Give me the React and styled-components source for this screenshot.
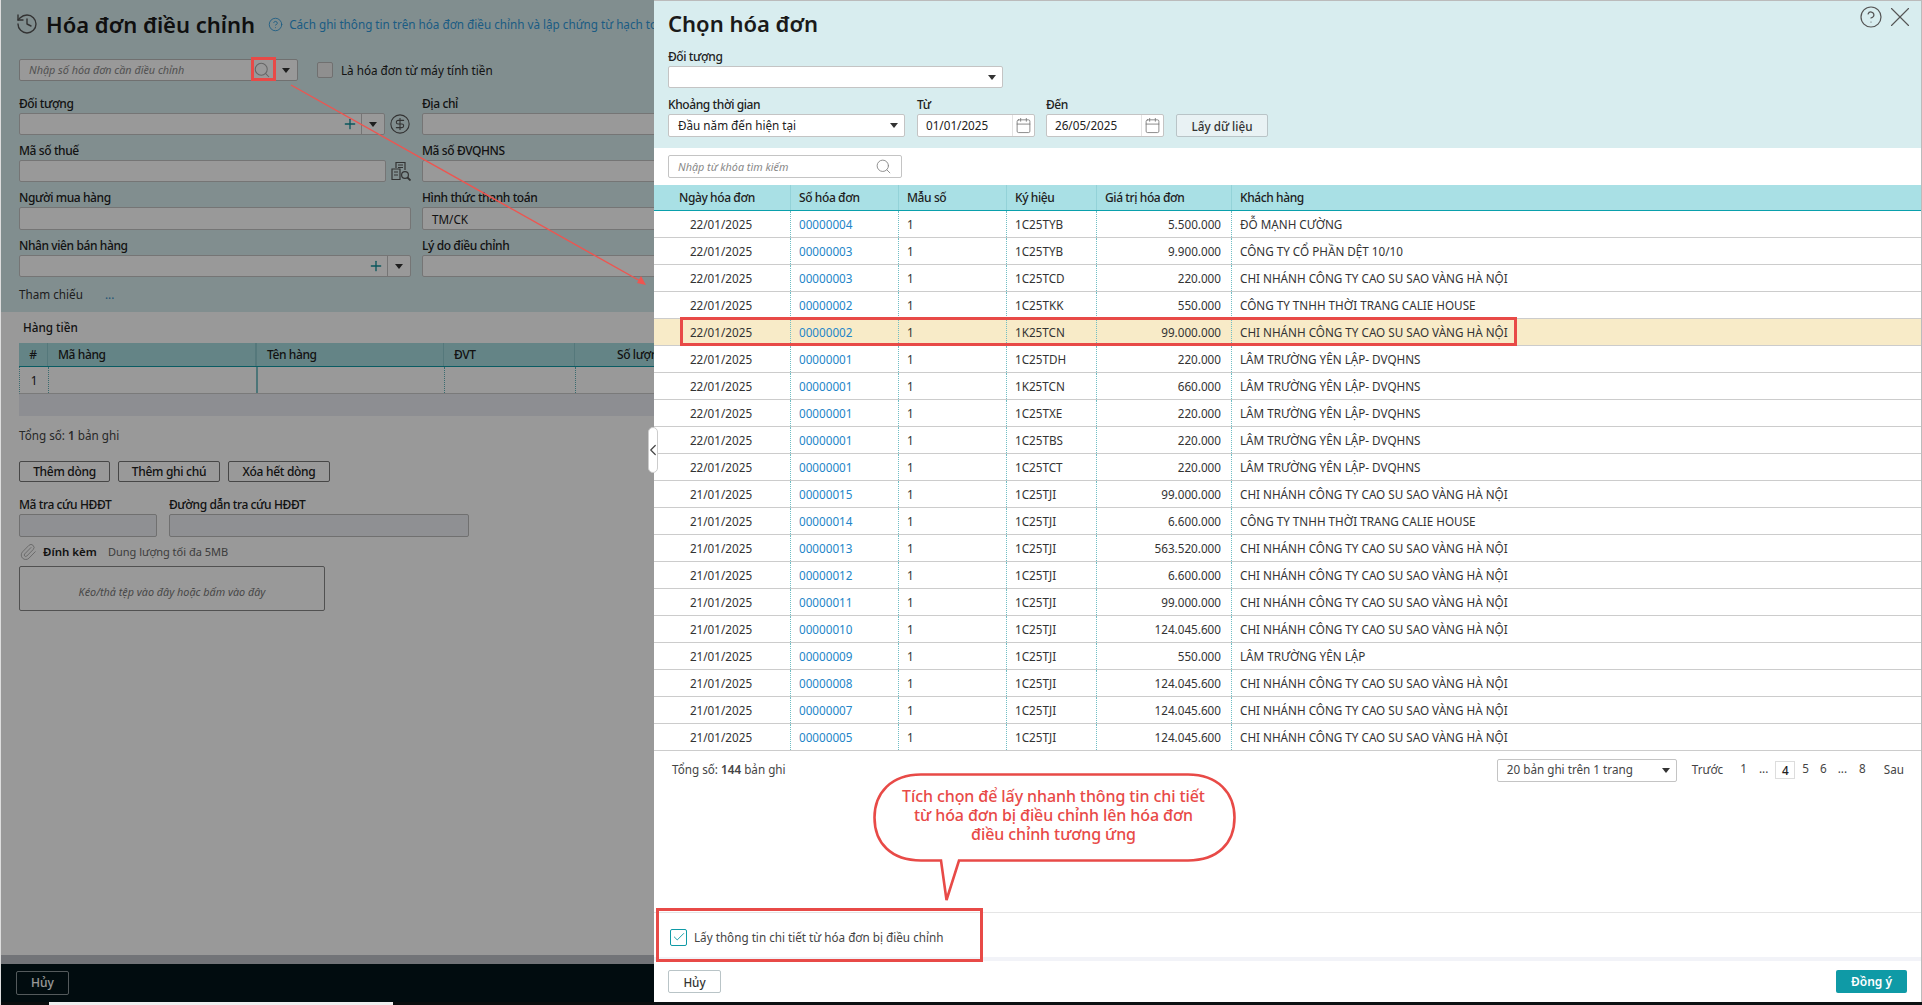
import styled, { createGlobalStyle } from "styled-components";
import {
  Calendar,
  Check,
  ChevronLeft,
  CircleDollarSign,
  CircleHelp,
  History,
  Paperclip,
  Plus,
  Search,
  X,
} from "lucide-react";

const CHI_NHANH = "CHI NHÁNH CÔNG TY CAO SU SAO VÀNG HÀ NỘI";
const LAM_TRUONG = "LÂM TRƯỜNG YÊN LẬP- DVQHNS";
const CALIE = "CÔNG TY TNHH THỜI TRANG CALIE HOUSE";

const invoices = [
  ["22/01/2025", "00000004", "1C25TYB", "5.500.000", "ĐỖ MẠNH CƯỜNG"],
  ["22/01/2025", "00000003", "1C25TYB", "9.900.000", "CÔNG TY CỔ PHẦN DỆT 10/10"],
  ["22/01/2025", "00000003", "1C25TCD", "220.000", CHI_NHANH],
  ["22/01/2025", "00000002", "1C25TKK", "550.000", CALIE],
  ["22/01/2025", "00000002", "1K25TCN", "99.000.000", CHI_NHANH],
  ["22/01/2025", "00000001", "1C25TDH", "220.000", LAM_TRUONG],
  ["22/01/2025", "00000001", "1K25TCN", "660.000", LAM_TRUONG],
  ["22/01/2025", "00000001", "1C25TXE", "220.000", LAM_TRUONG],
  ["22/01/2025", "00000001", "1C25TBS", "220.000", LAM_TRUONG],
  ["22/01/2025", "00000001", "1C25TCT", "220.000", LAM_TRUONG],
  ["21/01/2025", "00000015", "1C25TJI", "99.000.000", CHI_NHANH],
  ["21/01/2025", "00000014", "1C25TJI", "6.600.000", CALIE],
  ["21/01/2025", "00000013", "1C25TJI", "563.520.000", CHI_NHANH],
  ["21/01/2025", "00000012", "1C25TJI", "6.600.000", CHI_NHANH],
  ["21/01/2025", "00000011", "1C25TJI", "99.000.000", CHI_NHANH],
  ["21/01/2025", "00000010", "1C25TJI", "124.045.600", CHI_NHANH],
  ["21/01/2025", "00000009", "1C25TJI", "550.000", "LÂM TRƯỜNG YÊN LẬP"],
  ["21/01/2025", "00000008", "1C25TJI", "124.045.600", CHI_NHANH],
  ["21/01/2025", "00000007", "1C25TJI", "124.045.600", CHI_NHANH],
  ["21/01/2025", "00000005", "1C25TJI", "124.045.600", CHI_NHANH],
];

const App = () => {
  return (
    <Screen>
      <GlobalStyle />
      <InvoicePage>
        <TopSection>
          <PageTitleRow>
            <History size={24} strokeWidth={1.4} color="#555" />
            <PageTitle>Hóa đơn điều chỉnh</PageTitle>
            <CircleHelp size={15} strokeWidth={1.4} color="#2f9adb" />
            <HelpLink>Cách ghi thông tin trên hóa đơn điều chỉnh và lập chứng từ hạch toán</HelpLink>
          </PageTitleRow>

          <SearchRow>
            <InvoiceSearch>
              <Hint>Nhập số hóa đơn cần điều chỉnh</Hint>
              <Search size={18} strokeWidth={1.4} color="#aaa" />
              <ArrowBox $width={22} $plain>
                <Caret />
              </ArrowBox>
            </InvoiceSearch>
            <EmptyCheck />
            <CheckLabel>Là hóa đơn từ máy tính tiền</CheckLabel>
          </SearchRow>

          <FormGrid>
            <Field>
              <Label>Đối tượng</Label>
              <FieldWithIcon>
                <Input $width={366}>
                  <Plus size={16} strokeWidth={2} color="#11909a" />
                  <ArrowBox $width={23}>
                    <Caret />
                  </ArrowBox>
                </Input>
                <CircleDollarSign size={22} strokeWidth={1.2} color="#555" />
              </FieldWithIcon>
            </Field>
            <Field>
              <Label>Địa chỉ</Label>
              <Input />
            </Field>
            <Field>
              <Label>Mã số thuế</Label>
              <FieldWithIcon>
                <Input $width={367} />
                <BuildingSearchIcon />
              </FieldWithIcon>
            </Field>
            <Field>
              <Label>Mã số ĐVQHNS</Label>
              <Input />
            </Field>
            <Field>
              <Label>Người mua hàng</Label>
              <Input $height={23} />
            </Field>
            <Field>
              <Label>Hình thức thanh toán</Label>
              <Input $height={23}>
                <InputValue>TM/CK</InputValue>
                <TrailingCaret>
                  <Caret />
                </TrailingCaret>
              </Input>
            </Field>
            <Field>
              <Label>Nhân viên bán hàng</Label>
              <Input>
                <Plus size={16} strokeWidth={2} color="#11909a" />
                <ArrowBox $width={23}>
                  <Caret />
                </ArrowBox>
              </Input>
            </Field>
            <Field>
              <Label>Lý do điều chỉnh</Label>
              <Input />
            </Field>
          </FormGrid>

          <ReferenceRow>
            <span>Tham chiếu</span>
            <RefDots>...</RefDots>
          </ReferenceRow>
        </TopSection>

        <LinesSection>
          <LinesTitle>Hàng tiền</LinesTitle>
          <LinesHead>
            <LinesHeadCell $center>#</LinesHeadCell>
            <LinesHeadCell $strong>Mã hàng</LinesHeadCell>
            <LinesHeadCell>Tên hàng</LinesHeadCell>
            <LinesHeadCell>ĐVT</LinesHeadCell>
            <LinesHeadCell $right>Số lượng</LinesHeadCell>
          </LinesHead>
          <LinesRow>
            <LinesCell $center>1</LinesCell>
            <LinesCell $strong />
            <LinesCell />
            <LinesCell />
            <LinesCell />
          </LinesRow>
          <LinesSummary />
          <TotalLine>
            Tổng số: <b>1</b> bản ghi
          </TotalLine>
          <ActionRow>
            <OutlineButton $width={91}>Thêm dòng</OutlineButton>
            <OutlineButton $width={102}>Thêm ghi chú</OutlineButton>
            <OutlineButton $width={102}>Xóa hết dòng</OutlineButton>
          </ActionRow>
          <LookupRow>
            <Field>
              <Label>Mã tra cứu HĐĐT</Label>
              <LookupInput $width={138} />
            </Field>
            <Field>
              <Label>Đường dẫn tra cứu HĐĐT</Label>
              <LookupInput $width={300} />
            </Field>
          </LookupRow>
          <AttachRow>
            <Paperclip size={18} strokeWidth={1.2} color="#aaa" />
            <AttachTitle>Đính kèm</AttachTitle>
            <AttachHint>Dung lượng tối đa 5MB</AttachHint>
          </AttachRow>
          <DropZone>Kéo/thả tệp vào đây hoặc bấm vào đây</DropZone>
        </LinesSection>

        <PageStrip />
        <PageBar>
          <DarkButton>Hủy</DarkButton>
        </PageBar>
        <ScrollTrack>
          <ScrollThumb />
        </ScrollTrack>
        <Dim />
      </InvoicePage>

      <PickerPanel>
        <PickerHeader>
          <PickerTitleRow>
            <PickerTitle>Chọn hóa đơn</PickerTitle>
            <PickerTools>
              <CircleHelp size={24} strokeWidth={1.2} color="#555" />
              <X size={34} strokeWidth={0.8} color="#555" />
            </PickerTools>
          </PickerTitleRow>
          <Field>
            <Label>Đối tượng</Label>
            <Input $width={335}>
              <TrailingCaret>
                <Caret />
              </TrailingCaret>
            </Input>
          </Field>
          <FilterRow>
            <Field>
              <Label>Khoảng thời gian</Label>
              <Input $width={237} $height={23}>
                <InputValue $raised>Đầu năm đến hiện tại</InputValue>
                <TrailingCaret>
                  <Caret />
                </TrailingCaret>
              </Input>
            </Field>
            <Field>
              <Label>Từ</Label>
              <DateInput value="01/01/2025" />
            </Field>
            <Field>
              <Label>Đến</Label>
              <DateInput value="26/05/2025" />
            </Field>
            <FetchButton>Lấy dữ liệu</FetchButton>
          </FilterRow>
        </PickerHeader>

        <KeywordRow>
          <KeywordBox>
            <Hint>Nhập từ khóa tìm kiếm</Hint>
            <Search size={17} strokeWidth={1.3} color="#888" />
          </KeywordBox>
        </KeywordRow>

        <GridHead>
          <GridHeadCell $first>Ngày hóa đơn</GridHeadCell>
          <GridHeadCell>Số hóa đơn</GridHeadCell>
          <GridHeadCell>Mẫu số</GridHeadCell>
          <GridHeadCell>Ký hiệu</GridHeadCell>
          <GridHeadCell>Giá trị hóa đơn</GridHeadCell>
          <GridHeadCell>Khách hàng</GridHeadCell>
        </GridHead>
        {invoices.map((row, i) => (
          <GridRow key={i} $active={i === 4}>
            <GridCell $center>{row[0]}</GridCell>
            <GridCell $link>{row[1]}</GridCell>
            <GridCell>1</GridCell>
            <GridCell>{row[2]}</GridCell>
            <GridCell $right>{row[3]}</GridCell>
            <GridCell>{row[4]}</GridCell>
          </GridRow>
        ))}

        <PagerRow>
          <PagerText>
            Tổng số: <b>144</b> bản ghi
          </PagerText>
          <Pager>
            <PageSize>
              <InputValue $raised>20 bản ghi trên 1 trang</InputValue>
              <TrailingCaret>
                <Caret />
              </TrailingCaret>
            </PageSize>
            <PageWord $left={15}>Trước</PageWord>
            <PageNum $left={17}>1</PageNum>
            <PageNum $left={12}>...</PageNum>
            <CurrentPage>4</CurrentPage>
            <PageNum $left={7}>5</PageNum>
            <PageNum $left={11}>6</PageNum>
            <PageNum $left={11}>...</PageNum>
            <PageNum $left={12}>8</PageNum>
            <PageWord $left={18}>Sau</PageWord>
          </Pager>
        </PagerRow>

        <PanelSpacer />

        <DetailRow>
          <TickBox>
            <Check size={14} strokeWidth={1.6} color="#0f9aa6" />
          </TickBox>
          <span>Lấy thông tin chi tiết từ hóa đơn bị điều chỉnh</span>
        </DetailRow>
        <FooterStrip />
        <PanelFooter>
          <FetchButton $small>Hủy</FetchButton>
          <PrimaryButton>Đồng ý</PrimaryButton>
        </PanelFooter>
      </PickerPanel>

      <CollapseHandle>
        <ChevronLeft size={18} strokeWidth={1.6} color="#444" />
      </CollapseHandle>

      <ArrowLine viewBox="0 0 360 204" width="360" height="204">
        <line x1="1" y1="1" x2="352" y2="198" stroke="#ee5550" strokeWidth="1.4" />
        <path d="M356 201 L347 199 L351 192 Z" fill="#ee5550" />
      </ArrowLine>
      <RedFrame $x={251} $y={57} $w={25} $h={24} />
      <RedFrame $x={680} $y={317} $w={837} $h={29} />
      <RedFrame $x={656} $y={908} $w={327} $h={54} />

      <Callout>
        <CalloutShape viewBox="0 0 363 130" width="363" height="130">
          <path
            d="M48 1.5 H315 C345 1.5 361.5 20 361.5 44.5 C361.5 70 345 87.5 315 87.5 H86 L73.5 127 L68 87.5 H48 C18 87.5 1.5 70 1.5 44.5 C1.5 20 18 1.5 48 1.5 Z"
            fill="#fff"
            stroke="#e84a47"
            strokeWidth="2.6"
          />
        </CalloutShape>
        <CalloutText>
          Tích chọn để lấy nhanh thông tin chi tiết
          <br />
          từ hóa đơn bị điều chỉnh lên hóa đơn
          <br />
          điều chỉnh tương ứng
        </CalloutText>
      </Callout>
    </Screen>
  );
};

const DateInput = ({ value }) => (
  <DateBox>
    <DateValue>{value}</DateValue>
    <DateIcon>
      <Calendar size={17} strokeWidth={1.2} color="#777" />
    </DateIcon>
  </DateBox>
);

const BuildingSearchIcon = () => (
  <svg width="20" height="20" viewBox="0 0 20 20" fill="none" stroke="#555" strokeWidth="1.2">
    <path d="M5 7V1.5h9V9" />
    <path d="M7 4h5M7 6.5h5" />
    <path d="M1 18.5V8h8v10.5z" />
    <path d="M3 11h4M3 14h4" />
    <circle cx="14" cy="14" r="3.4" />
    <path d="M16.5 16.5L19.5 19.5" strokeWidth="1.8" />
  </svg>
);

export default App;

const GlobalStyle = createGlobalStyle`
  html, body {
    margin: 0;
    padding: 0;
    background: #111;
    overflow: hidden;
  }
  * {
    box-sizing: border-box;
  }
  svg {
    flex-shrink: 0;
  }
  b {
    font-weight: 600;
  }
`;

const Screen = styled.div`
  position: relative;
  display: flex;
  width: 1922px;
  height: 1005px;
  overflow: hidden;
  background: #0d1113;
  font-family: "Noto Sans", "Open Sans", sans-serif;
  font-size: 11.7px;
  line-height: 18px;
  color: #212121;
`;

const InvoicePage = styled.div`
  position: relative;
  display: flex;
  flex-direction: column;
  width: 654px;
  height: 1005px;
  flex-shrink: 0;
  overflow: hidden;
  background: #fff;
  border-left: 1px solid #ddd;
`;

const Dim = styled.div`
  position: absolute;
  inset: 0 0 3px 0;
  background: rgba(0, 0, 0, 0.4);
`;

const TopSection = styled.div`
  height: 312px;
  flex-shrink: 0;
  padding-left: 18px;
  background: #d8edef;
`;

const PageTitleRow = styled.div`
  display: flex;
  align-items: center;
  height: 48px;
  white-space: nowrap;
  svg:first-child {
    margin-left: -4px;
  }
`;

const PageTitle = styled.h1`
  margin: 0 13px 0 7px;
  font-size: 22px;
  font-weight: 600;
  line-height: 28px;
  color: #1a1a1a;
`;

const HelpLink = styled.span`
  margin-left: 6px;
  font-size: 11.7px;
  color: #2f9adb;
`;

const SearchRow = styled.div`
  display: flex;
  align-items: center;
  height: 22px;
  margin-top: 11px;
`;

const InvoiceSearch = styled.div`
  display: flex;
  align-items: center;
  width: 279px;
  height: 22px;
  padding-left: 9px;
  background: #fff;
  border: 1px solid #bbb;
  border-radius: 2px;
  svg {
    margin: 0 1px 0 auto;
  }
`;

const Hint = styled.span`
  font-size: 10.8px;
  font-style: italic;
  color: #888;
`;

const EmptyCheck = styled.span`
  width: 16px;
  height: 16px;
  margin-left: 19px;
  background: #eee;
  border: 1px solid #bbb;
  border-radius: 2px;
`;

const CheckLabel = styled.span`
  margin-left: 8px;
`;

const FormGrid = styled.div`
  display: grid;
  grid-template-columns: 392px 300px;
  column-gap: 11px;
  row-gap: 7px;
  margin-top: 14px;
`;

const Field = styled.div`
  display: flex;
  flex-direction: column;
  min-width: 0;
`;

const Label = styled.label`
  height: 18px;
  font-size: 12px;
  font-weight: 500;
  line-height: 18px;
  letter-spacing: -0.4px;
  color: #212121;
  white-space: nowrap;
`;

const FieldWithIcon = styled.div`
  display: flex;
  align-items: center;
  justify-content: space-between;
`;

const Input = styled.div`
  display: flex;
  align-items: center;
  justify-content: flex-end;
  width: ${(p) => (p.$width ? `${p.$width}px` : "100%")};
  height: ${(p) => p.$height || 22}px;
  background: #fff;
  border: 1px solid #c4c4c4;
  border-radius: 2px;
`;

const InputValue = styled.span`
  margin: 0 auto ${(p) => (p.$raised ? 2 : 0)}px 0;
  padding-left: 9px;
  white-space: nowrap;
`;

const ArrowBox = styled.span`
  display: flex;
  align-items: center;
  justify-content: center;
  width: ${(p) => p.$width}px;
  height: 100%;
  margin-left: 3px;
  border-left: ${(p) => (p.$plain ? "none" : "1px solid #c4c4c4")};
`;

const TrailingCaret = styled.span`
  display: flex;
  align-items: center;
  padding-right: 6px;
`;

const Caret = styled.span`
  width: 0;
  height: 0;
  border-left: 4px solid transparent;
  border-right: 4px solid transparent;
  border-top: 5px solid #333;
`;

const ReferenceRow = styled.div`
  display: flex;
  gap: 22px;
  margin-top: 8px;
  color: #333;
`;

const RefDots = styled.span`
  color: #3a8fc4;
`;

const LinesSection = styled.div`
  display: flex;
  flex-direction: column;
  padding-left: 18px;
`;

const LinesTitle = styled.div`
  margin: 6px 0 7px 4px;
  font-weight: 500;
`;

const linesColumns = "29px 209px 187px 131px 100px";

const LinesHead = styled.div`
  display: grid;
  grid-template-columns: ${linesColumns};
  height: 24px;
  background: #a7dcdf;
  border-bottom: 1px solid #0f9aa6;
`;

const LinesHeadCell = styled.div`
  padding: 0 9px 0 ${(p) => (p.$center ? 9 : 10)}px;
  font-size: 12px;
  font-weight: 500;
  line-height: 23px;
  letter-spacing: -0.4px;
  text-align: ${(p) => (p.$center ? "center" : p.$right ? "right" : "left")};
  border-right: ${(p) => (p.$strong ? "2px" : "1px")} solid #8ec9cd;
  white-space: nowrap;
`;

const LinesRow = styled.div`
  display: grid;
  grid-template-columns: ${linesColumns};
  height: 27px;
  border-bottom: 1px solid #ccc;
  border-left: 1px dotted #5fb3ba;
`;

const LinesCell = styled.div`
  line-height: 26px;
  text-align: ${(p) => (p.$center ? "center" : "left")};
  border-right: ${(p) => (p.$strong ? "2px solid #7fc3c8" : "1px dotted #5fb3ba")};
`;

const LinesSummary = styled.div`
  height: 22px;
  background: #ebedf3;
`;

const TotalLine = styled.div`
  margin-top: 10px;
  color: #444;
`;

const ActionRow = styled.div`
  display: flex;
  gap: 8px;
  margin-top: 17px;
`;

const OutlineButton = styled.button`
  width: ${(p) => p.$width}px;
  height: 21px;
  padding: 0;
  font: 500 12px/19px "Noto Sans", sans-serif;
  letter-spacing: -0.3px;
  color: #212121;
  background: #fff;
  border: 1px solid #777;
  border-radius: 2px;
`;

const LookupRow = styled.div`
  display: flex;
  gap: 12px;
  margin-top: 14px;
`;

const LookupInput = styled.div`
  width: ${(p) => p.$width}px;
  height: 23px;
  background: #eff0f6;
  border: 1px solid #bbb;
  border-radius: 2px;
`;

const AttachRow = styled.div`
  display: flex;
  align-items: center;
  height: 16px;
  margin-top: 7px;
`;

const AttachTitle = styled.span`
  margin-left: 6px;
  font-size: 11.5px;
  font-weight: 600;
`;

const AttachHint = styled.span`
  margin-left: 11px;
  font-size: 11px;
  color: #666;
`;

const DropZone = styled.div`
  display: flex;
  align-items: center;
  justify-content: center;
  width: 306px;
  height: 45px;
  margin-top: 6px;
  padding-top: 7px;
  font-size: 10.8px;
  font-style: italic;
  color: #777;
  border: 1px solid #888;
  border-radius: 2px;
`;

const PageStrip = styled.div`
  height: 9px;
  margin-top: auto;
  flex-shrink: 0;
  background: #bfc1c8;
`;

const PageBar = styled.div`
  display: flex;
  align-items: flex-start;
  height: 38px;
  flex-shrink: 0;
  padding: 7px 0 0 15px;
  background: #021519;
`;

const DarkButton = styled.button`
  width: 53px;
  height: 24px;
  padding: 0;
  font: 500 12px/20px "Noto Sans", sans-serif;
  color: #fff;
  background: transparent;
  border: 1px solid #8c979a;
  border-radius: 2px;
`;

const ScrollTrack = styled.div`
  height: 3px;
  flex-shrink: 0;
  padding-left: 48px;
  background: #0a0d0e;
`;

const ScrollThumb = styled.div`
  width: 344px;
  height: 3px;
  background: #eee;
`;

const PickerPanel = styled.div`
  display: flex;
  flex-direction: column;
  width: 1268px;
  height: 1002px;
  background: #fff;
  border-top: 1px solid #bbb;
  border-right: 1px solid #bbb;
`;

const PickerHeader = styled.div`
  height: 147px;
  flex-shrink: 0;
  padding-left: 14px;
  background: #d8edef;
`;

const PickerTitleRow = styled.div`
  display: flex;
  justify-content: space-between;
  height: 47px;
`;

const PickerTitle = styled.h2`
  margin: 8px 0 0;
  font-size: 22px;
  font-weight: 600;
  line-height: 28px;
  color: #1a1a1a;
`;

const PickerTools = styled.div`
  display: flex;
  align-items: center;
  height: 32px;
  padding-right: 4px;
`;

const FilterRow = styled.div`
  display: flex;
  align-items: flex-end;
  margin-top: 8px;
  & > :nth-child(2) {
    margin-left: 12px;
  }
  & > :nth-child(3) {
    margin-left: 11px;
  }
  & > :nth-child(4) {
    margin-left: 12px;
  }
`;

const DateBox = styled.div`
  display: flex;
  align-items: center;
  width: 118px;
  height: 23px;
  background: #fff;
  border: 1px solid #c4c4c4;
  border-radius: 2px;
`;

const DateValue = styled.span`
  flex: 1;
  padding-left: 8px;
  margin-bottom: 2px;
`;

const DateIcon = styled.span`
  display: flex;
  align-items: center;
  justify-content: center;
  width: 22px;
  height: 100%;
  border-left: 1px solid #e3e3e3;
`;

const FetchButton = styled.button`
  width: ${(p) => (p.$small ? 53 : 92)}px;
  height: 23px;
  padding: 0;
  font: 500 11.7px/20px "Noto Sans", sans-serif;
  color: #333;
  background: ${(p) => (p.$small ? "#fff" : "#e9f2f4")};
  border: 1px solid #b9c4c7;
  border-radius: 2px;
`;

const KeywordRow = styled.div`
  height: 37px;
  flex-shrink: 0;
  padding: 7px 0 0 14px;
`;

const KeywordBox = styled.div`
  display: flex;
  align-items: center;
  justify-content: space-between;
  width: 234px;
  height: 23px;
  padding: 0 9px;
  border: 1px solid #c4c4c4;
  border-radius: 2px;
`;

const gridColumns = "136px 108px 108px 90px 135px 1fr";

const GridHead = styled.div`
  display: grid;
  grid-template-columns: ${gridColumns};
  height: 26px;
  flex-shrink: 0;
  background: #a9e0e5;
  border-bottom: 1px solid #0aa0ac;
`;

const GridHeadCell = styled.div`
  padding-left: ${(p) => (p.$first ? 25 : 8)}px;
  font-size: 12px;
  font-weight: 500;
  line-height: 25px;
  letter-spacing: -0.4px;
  border-left: ${(p) => (p.$first ? "none" : "1px solid #93d2d8")};
`;

const GridRow = styled.div`
  display: grid;
  grid-template-columns: ${gridColumns};
  height: 27px;
  flex-shrink: 0;
  background: ${(p) => (p.$active ? "#f8ebc8" : "#fff")};
  border-bottom: 1px solid #ccc;
`;

const GridCell = styled.div`
  padding: 0 10px 0 8px;
  line-height: 26px;
  white-space: nowrap;
  color: ${(p) => (p.$link ? "#2285c8" : "#333")};
  text-align: ${(p) => (p.$center ? "center" : p.$right ? "right" : "left")};
  &:not(:first-child) {
    border-left: 1px dotted #6fbdc4;
  }
`;

const PagerRow = styled.div`
  display: flex;
  align-items: center;
  justify-content: space-between;
  height: 24px;
  flex-shrink: 0;
  margin-top: 7px;
  padding: 0 17px 0 18px;
  color: #444;
`;

const PagerText = styled.span`
  margin-bottom: 2px;
`;

const Pager = styled.div`
  display: flex;
  align-items: center;
`;

const PageSize = styled.div`
  display: flex;
  align-items: center;
  width: 180px;
  height: 23px;
  background: #fff;
  border: 1px solid #c4c4c4;
  border-radius: 2px;
`;

const PageWord = styled.span`
  margin: 0 0 2px ${(p) => p.$left}px;
`;

const PageNum = styled.span`
  margin-left: ${(p) => p.$left}px;
  margin-top: -5px;
`;

const CurrentPage = styled.span`
  width: 20px;
  height: 18px;
  margin-left: 7px;
  font-weight: 500;
  line-height: 16px;
  text-align: center;
  color: #212121;
  border: 1px solid #ddd;
`;

const PanelSpacer = styled.div`
  flex: 1;
`;

const DetailRow = styled.div`
  display: flex;
  align-items: center;
  gap: 7px;
  height: 45px;
  flex-shrink: 0;
  padding: 4px 0 0 16px;
  color: #444;
  border-top: 1px solid #e5e5e5;
`;

const TickBox = styled.span`
  display: flex;
  align-items: center;
  justify-content: center;
  width: 17px;
  height: 17px;
  border: 1px solid #0f9aa6;
  border-radius: 2px;
`;

const FooterStrip = styled.div`
  height: 4px;
  flex-shrink: 0;
  background: #f2f3f8;
`;

const PanelFooter = styled.div`
  display: flex;
  align-items: flex-start;
  justify-content: space-between;
  height: 41px;
  flex-shrink: 0;
  padding: 9px 14px 0;
`;

const PrimaryButton = styled.button`
  width: 71px;
  height: 23px;
  padding: 0;
  font: 600 12px/20px "Noto Sans", sans-serif;
  color: #fff;
  background: #0f9aa6;
  border: none;
  border-radius: 2px;
`;

const CollapseHandle = styled.div`
  position: absolute;
  left: 648px;
  top: 427px;
  display: flex;
  align-items: center;
  justify-content: center;
  width: 10px;
  height: 46px;
  background: #fff;
  border: 1px solid #ccc;
  border-radius: 5px;
`;

const ArrowLine = styled.svg`
  position: absolute;
  left: 290px;
  top: 84px;
`;

const RedFrame = styled.div`
  position: absolute;
  left: ${(p) => p.$x}px;
  top: ${(p) => p.$y}px;
  width: ${(p) => p.$w}px;
  height: ${(p) => p.$h}px;
  border: 3px solid #e84a47;
`;

const Callout = styled.div`
  position: absolute;
  left: 873px;
  top: 773px;
  width: 363px;
  height: 130px;
`;

const CalloutShape = styled.svg`
  display: block;
`;

const CalloutText = styled.div`
  position: absolute;
  left: 0;
  right: 2px;
  top: 14px;
  font-size: 16px;
  font-weight: 500;
  line-height: 19px;
  letter-spacing: -0.1px;
  text-align: center;
  color: #e84a47;
`;
